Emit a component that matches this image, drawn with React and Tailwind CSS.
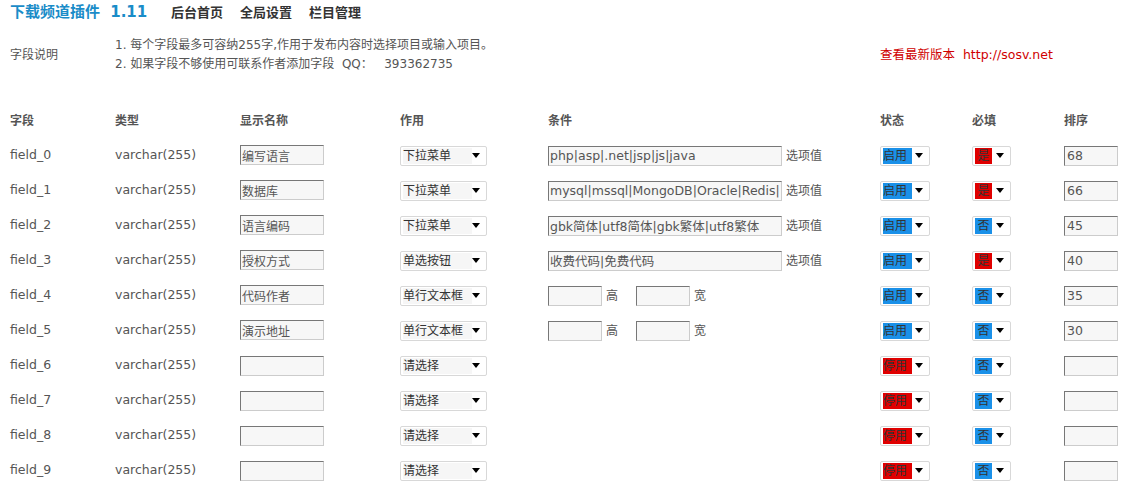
import React from "react";

const rows = [
  { f: "field_0", name: "编写语言", use: "下拉菜单", cond: "php|asp|.net|jsp|js|java", kind: "opt", on: true, req: true, sort: "68" },
  { f: "field_1", name: "数据库", use: "下拉菜单", cond: "mysql|mssql|MongoDB|Oracle|Redis|", kind: "opt", on: true, req: true, sort: "66" },
  { f: "field_2", name: "语言编码", use: "下拉菜单", cond: "gbk简体|utf8简体|gbk繁体|utf8繁体", kind: "opt", on: true, req: false, sort: "45" },
  { f: "field_3", name: "授权方式", use: "单选按钮", cond: "收费代码|免费代码", kind: "opt", on: true, req: true, sort: "40" },
  { f: "field_4", name: "代码作者", use: "单行文本框", kind: "size", on: true, req: false, sort: "35" },
  { f: "field_5", name: "演示地址", use: "单行文本框", kind: "size", on: true, req: false, sort: "30" },
  { f: "field_6", name: "", use: "请选择", kind: "none", on: false, req: false, sort: "" },
  { f: "field_7", name: "", use: "请选择", kind: "none", on: false, req: false, sort: "" },
  { f: "field_8", name: "", use: "请选择", kind: "none", on: false, req: false, sort: "" },
  { f: "field_9", name: "", use: "请选择", kind: "none", on: false, req: false, sort: "" },
];

const inputCls =
  "h-[20px] px-[1px] bg-[#f7f7f7] text-[#555] border border-t-[#777] border-l-[#777] border-b-[#ccc] border-r-[#ccc] outline-none";

function Arrow() {
  return (
    <svg width="8" height="5" viewBox="0 0 8 5" className="shrink-0">
      <path d="M0 0h8L4 5z" fill="#000" />
    </svg>
  );
}

function FakeSelect({ w, children }) {
  return (
    <div className={`${w} h-[20px] flex items-center justify-between pl-[2px] pr-[6px] bg-white border border-[#d8d8d8] rounded-[2px]`}>
      {children}
      <Arrow />
    </div>
  );
}

export default function App() {
  return (
    <div
      className="w-[1148px] h-[493px] bg-white text-[12px] text-[#555] overflow-hidden"
      style={{ fontFamily: '"DejaVu Sans", Verdana, "Noto Sans CJK SC", sans-serif' }}
    >
      {/* Top bar */}
      <div className="h-[25px] flex items-center pl-[10px]">
        <span className="text-[15px] font-bold text-[#1a8cc8] w-[161px]">
          下载频道插件 <span className="ml-[5px]">1.11</span>
        </span>
        <div className="flex gap-[17px] text-[13px] font-bold text-[#333]">
          <span>后台首页</span>
          <span>全局设置</span>
          <span>栏目管理</span>
        </div>
      </div>

      {/* Notes */}
      <div className="mt-[11px] pl-[10px] grid grid-cols-[105px_765px_1fr] items-center">
        <div>字段说明</div>
        <div className="leading-[19px]">
          <div>1. 每个字段最多可容纳255字,作用于发布内容时选择项目或输入项目。</div>
          <div>
            2. 如果字段不够使用可联系作者添加字段&nbsp;&nbsp;QQ：&nbsp;&nbsp;&nbsp;393362735
          </div>
        </div>
        <div className="text-[#d00000] text-[12.5px]">查看最新版本&nbsp;&nbsp;http://sosv.net</div>
      </div>

      {/* Table */}
      <div className="mt-[30px] pl-[10px]">
        <div className="h-[34px] grid grid-cols-[105px_125px_160px_148px_332px_92px_92px_1fr] items-center font-bold">
          <div>字段</div>
          <div>类型</div>
          <div>显示名称</div>
          <div>作用</div>
          <div>条件</div>
          <div>状态</div>
          <div>必填</div>
          <div>排序</div>
        </div>
        {rows.map((r) => (
          <div
            key={r.f}
            className="h-[35px] grid grid-cols-[105px_125px_160px_148px_332px_92px_92px_1fr] items-center"
          >
            <div className="text-[12.5px]">{r.f}</div>
            <div className="text-[12.5px]">varchar(255)</div>
            <div>
              <input readOnly value={r.name} className={`${inputCls} w-[84px] text-[12px]`} />
            </div>
            <div>
              <FakeSelect w="w-[87px]">
                <span className="text-[#333] bg-[#f6f6f6] pr-[6px] flex-1 leading-[16px]">{r.use}</span>
              </FakeSelect>
            </div>
            <div className="flex items-center">
              {r.kind === "opt" && (
                <>
                  <input readOnly value={r.cond} className={`${inputCls} w-[234px] text-[12.5px]`} />
                  <span className="ml-[4px]">选项值</span>
                </>
              )}
              {r.kind === "size" && (
                <>
                  <input readOnly value="" className={`${inputCls} w-[54px]`} />
                  <span className="ml-[4px] w-[30px]">高</span>
                  <input readOnly value="" className={`${inputCls} w-[54px]`} />
                  <span className="ml-[4px]">宽</span>
                </>
              )}
            </div>
            <div>
              <FakeSelect w="w-[50px]">
                <span className={`${r.on ? "bg-[#1a90e8]" : "bg-[#e00000]"} text-[#333] w-[29px] leading-[16px]`}>
                  {r.on ? "启用" : "停用"}
                </span>
              </FakeSelect>
            </div>
            <div>
              <FakeSelect w="w-[39px]">
                <span className={`${r.req ? "bg-[#e00000]" : "bg-[#1a90e8]"} text-[#333] w-[17px] text-center leading-[16px]`}>
                  {r.req ? "是" : "否"}
                </span>
              </FakeSelect>
            </div>
            <div>
              <input readOnly value={r.sort} className={`${inputCls} w-[54px] pl-[2px] text-[12.5px]`} />
            </div>
          </div>
        ))}
      </div>
    </div>
  );
}
